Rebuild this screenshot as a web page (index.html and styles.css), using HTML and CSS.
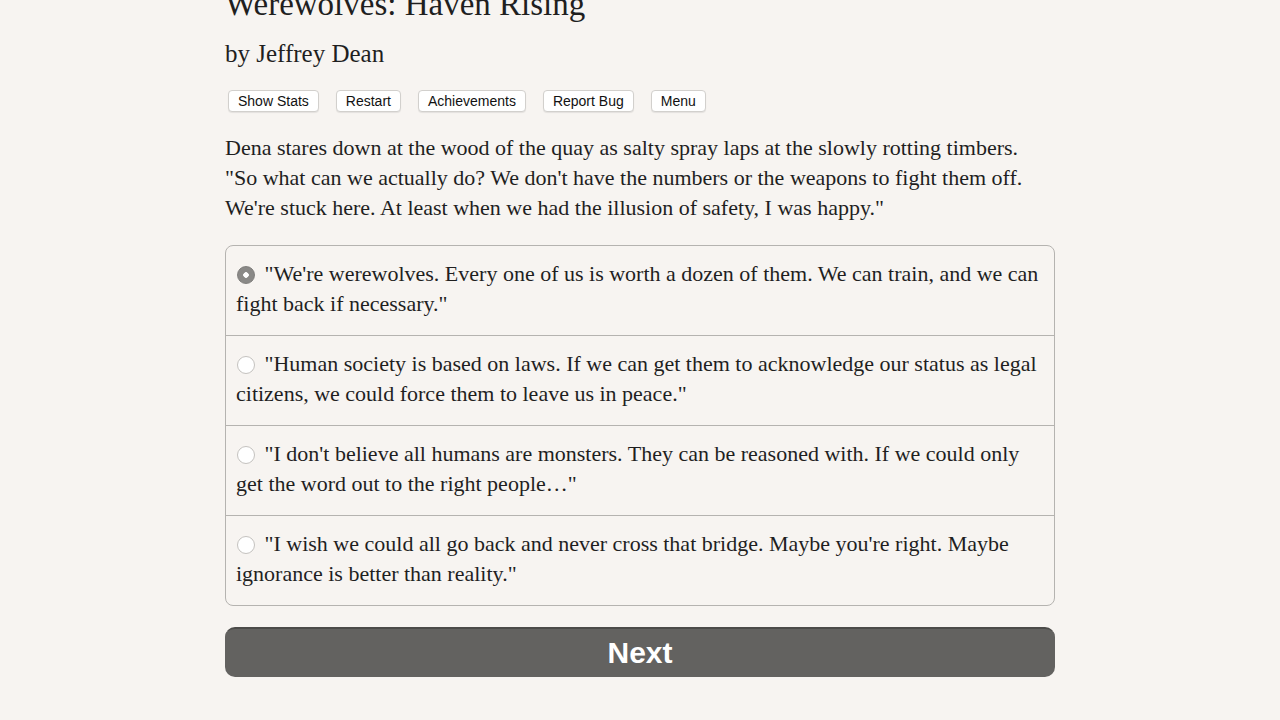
FILE: index.html
```html
<!DOCTYPE html>
<html>
<head>
    <title>Werewolves: Haven Rising</title>
    <link rel="stylesheet" href="styles.css">
</head>
<body>
    <div id="container">
        <h1 class="gameTitle">Werewolves: Haven Rising</h1>
        <h2 class="gameAuthor">by Jeffrey Dean</h2>

        <div class="headerButtons">
            <button type="button" class="spacedLink">Show Stats</button>
            <button type="button" class="spacedLink">Restart</button>
            <button type="button" class="spacedLink">Achievements</button>
            <button type="button" class="spacedLink">Report Bug</button>
            <button type="button" class="spacedLink">Menu</button>
        </div>

        <p class="storyText">Dena stares down at the wood of the quay as salty spray laps at the slowly rotting timbers. "So what can we actually do? We don't have the numbers or the weapons to fight them off. We're stuck here. At least when we had the illusion of safety, I was happy."</p>

        <form id="choiceForm">
            <div class="choice">
                <label><input type="radio" name="choice" value="0" checked> "We're werewolves. Every one of us is worth a dozen of them. We can train, and we can fight back if necessary."</label>
                <label><input type="radio" name="choice" value="1"> "Human society is based on laws. If we can get them to acknowledge our status as legal citizens, we could force them to leave us in peace."</label>
                <label><input type="radio" name="choice" value="2"> "I don't believe all humans are monsters. They can be reasoned with. If we could only get the word out to the right people…"</label>
                <label><input type="radio" name="choice" value="3"> "I wish we could all go back and never cross that bridge. Maybe you're right. Maybe ignorance is better than reality."</label>
            </div>
            <button type="button" class="nextButton">Next</button>
        </form>
    </div>
</body>
</html>
```

FILE: styles.css
```css
body {
    margin: 0;
    background-color: #f7f4f1;
    color: #1f1f1f;
    font-family: "Liberation Serif", "Times New Roman", serif;
    overflow: hidden;
}

#container {
    width: 830px;
    margin: 0 auto;
}

.gameTitle {
    font-size: 33px;
    font-weight: normal;
    line-height: 36px;
    margin: -14px 0 0 0;
}

.gameAuthor {
    font-size: 25px;
    font-weight: normal;
    line-height: 30px;
    margin: 17px 0 0 0;
}

.headerButtons {
    display: flex;
    gap: 17px;
    margin: 21px 0 0 3px;
}

.spacedLink {
    font-family: "Liberation Sans", Arial, sans-serif;
    font-size: 14px;
    color: #111;
    background-color: #fff;
    border: 1px solid #d2d0cd;
    border-radius: 4px;
    padding: 0 9px;
    height: 22px;
    box-shadow: 0 1px 1px rgba(0, 0, 0, 0.08);
}

.storyText {
    font-size: 22px;
    line-height: 30px;
    margin: 21px 0 0 0;
}

.choice {
    margin-top: 22px;
    border: 1px solid #b5b3b0;
    border-radius: 8px;
    overflow: hidden;
}

.choice label {
    display: block;
    font-size: 22px;
    line-height: 30px;
    padding: 13px 10px 16px 10px;
    border-top: 1px solid #b5b3b0;
}

.choice label:first-child {
    border-top: none;
}

.choice input {
    appearance: none;
    width: 18px;
    height: 18px;
    margin: 0 4px 0 1px;
    border: 1px solid #c4c2bf;
    border-radius: 50%;
    background-color: #fff;
    vertical-align: -3px;
}

.choice input:checked {
    border-color: #7e7d7b;
    background: radial-gradient(circle, #fff 0 2.5px, #8a8987 3px);
}

.nextButton {
    display: block;
    width: 100%;
    height: 50px;
    margin-top: 21px;
    border: none;
    border-top: 2px solid #4c4b49;
    border-radius: 10px;
    background-color: #636260;
    color: #fff;
    font-family: "Liberation Sans", Arial, sans-serif;
    font-size: 30px;
    font-weight: bold;
}
```
